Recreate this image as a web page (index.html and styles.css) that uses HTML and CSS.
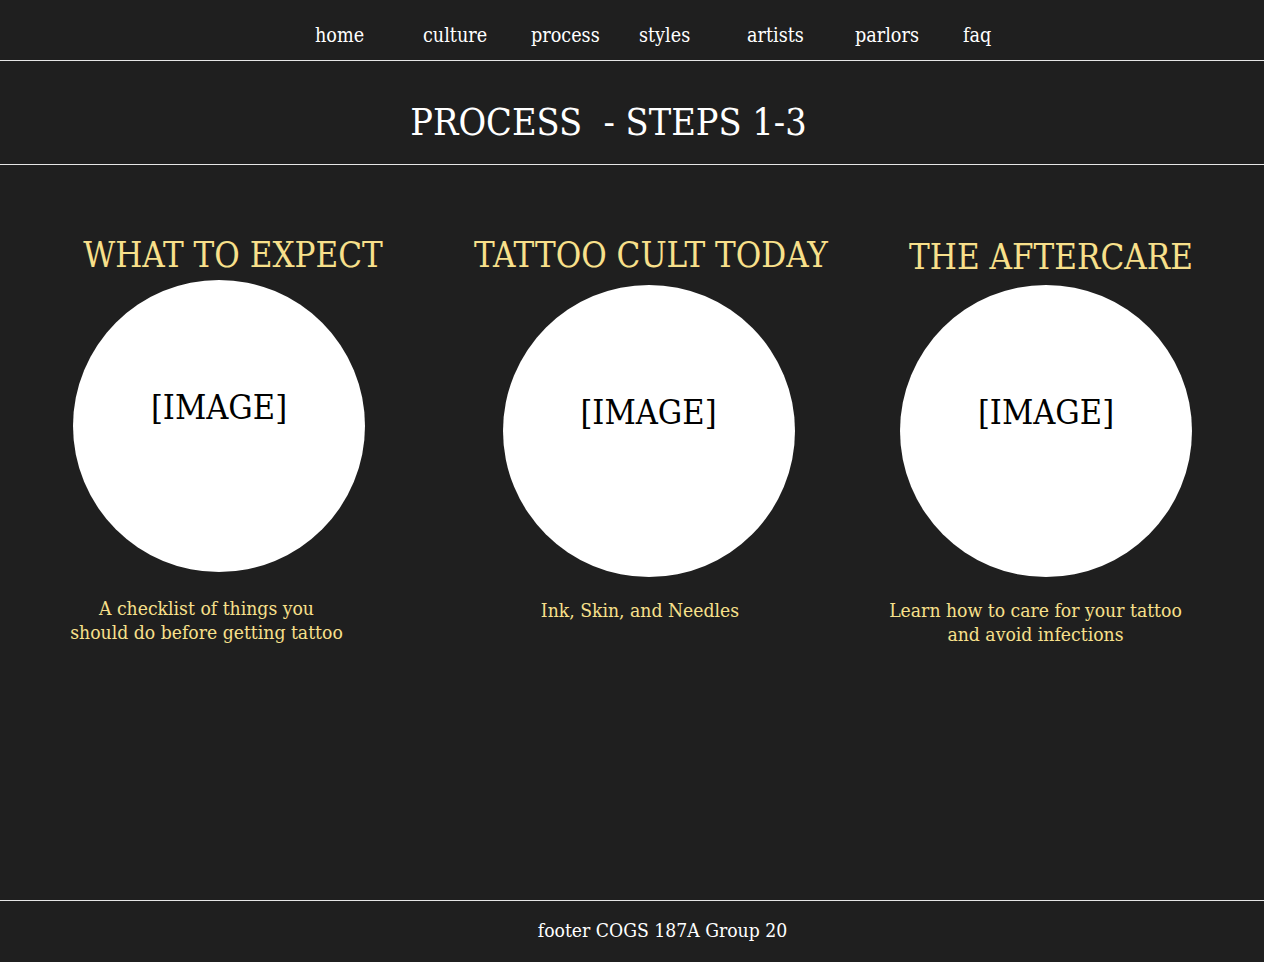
FILE: index.html
```html
<!DOCTYPE html>
<html lang="en">
<head>
<meta charset="utf-8">
<title>Process - Steps 1-3</title>
<link rel="stylesheet" href="styles.css">
</head>
<body>
<header class="topnav">
  <a class="navlink" href="#">home</a>
  <a class="navlink" href="#">culture</a>
  <a class="navlink" href="#">process</a>
  <a class="navlink" href="#">styles</a>
  <a class="navlink" href="#">artists</a>
  <a class="navlink" href="#">parlors</a>
  <a class="navlink" href="#">faq</a>
</header>
<section class="titlebar">
  <h1 class="pagetitle">PROCESS  - STEPS 1-3</h1>
</section>
<main class="steps">
  <div class="step step-1">
    <h2 class="step-heading">WHAT TO EXPECT</h2>
    <div class="circle"><span class="circle-label">[IMAGE]</span></div>
    <p class="caption">A checklist of things you<br>should do before getting tattoo</p>
  </div>
  <div class="step step-2">
    <h2 class="step-heading">TATTOO CULT TODAY</h2>
    <div class="circle"><span class="circle-label">[IMAGE]</span></div>
    <p class="caption">Ink, Skin, and Needles</p>
  </div>
  <div class="step step-3">
    <h2 class="step-heading">THE AFTERCARE</h2>
    <div class="circle"><span class="circle-label">[IMAGE]</span></div>
    <p class="caption">Learn how to care for your tattoo<br>and avoid infections</p>
  </div>
</main>
<footer class="footer">
  <p class="footer-text">footer COGS 187A Group 20</p>
</footer>
</body>
</html>
```

FILE: styles.css
```css
html, body {
  margin: 0;
  padding: 0;
}
body {
  background: #1f1f1f;
  color: #ffffff;
  font-family: "DejaVu Serif Condensed", "DejaVu Serif", serif;
  font-stretch: condensed;
  height: 962px;
  display: flex;
  flex-direction: column;
}
.topnav {
  height: 61px;
  box-sizing: border-box;
  border-bottom: 1px solid #e6e6e6;
  display: flex;
  align-items: center;
  padding-left: 315px;
}
.navlink {
  width: 108px;
  color: #ffffff;
  text-decoration: none;
  font-size: 19.6px;
  line-height: 24px;
  margin-top: 12px;
}
.titlebar {
  height: 104px;
  box-sizing: border-box;
  border-bottom: 1px solid #e6e6e6;
  display: flex;
  align-items: center;
  justify-content: center;
  padding-right: 47px;
}
.pagetitle {
  margin: 18px 0 0;
  font-weight: normal;
  font-size: 37.5px;
  line-height: 48px;
  white-space: pre;
}
.steps {
  flex: 1;
  display: grid;
  grid-template-columns: 380px 380px 380px;
  column-gap: 29px;
  padding-left: 43px;
  padding-top: 71px;
  align-items: start;
}
.step {
  display: flex;
  flex-direction: column;
  align-items: center;
}
.step-heading {
  margin: -2px 0 0;
  font-weight: normal;
  font-size: 34.6px;
  line-height: 42px;
  color: #f8e08b;
  white-space: nowrap;
}
.step-2 .step-heading { margin-left: 18px; }
.step-3 .step-heading { margin-top: 0; }
.circle {
  width: 292px;
  height: 292px;
  border-radius: 50%;
  background: #ffffff;
  margin-top: 4px;
  box-sizing: border-box;
  padding-top: 107px;
  text-align: center;
}
.step-1 .circle { margin-left: -28px; }
.step-2 .circle { margin-top: 9px; margin-left: 13px; }
.step-3 .circle { margin-top: 7px; margin-left: -10px; }
.circle-label {
  color: #000000;
  font-size: 34px;
  line-height: 40px;
}
.caption {
  margin: 25px 0 0;
  font-size: 19.2px;
  line-height: 24px;
  color: #f8e08b;
  text-align: center;
}
.step-1 .caption { margin-left: -53px; }
.step-2 .caption { margin-top: 22px; margin-left: -4px; }
.step-3 .caption { margin-top: 22px; margin-left: -31px; }
.footer {
  height: 62px;
  box-sizing: border-box;
  border-top: 1px solid #e6e6e6;
  display: flex;
  align-items: center;
  justify-content: center;
  padding-left: 61px;
}
.footer-text {
  margin: -1px 0 0;
  font-size: 19.2px;
  line-height: 24px;
}
```
